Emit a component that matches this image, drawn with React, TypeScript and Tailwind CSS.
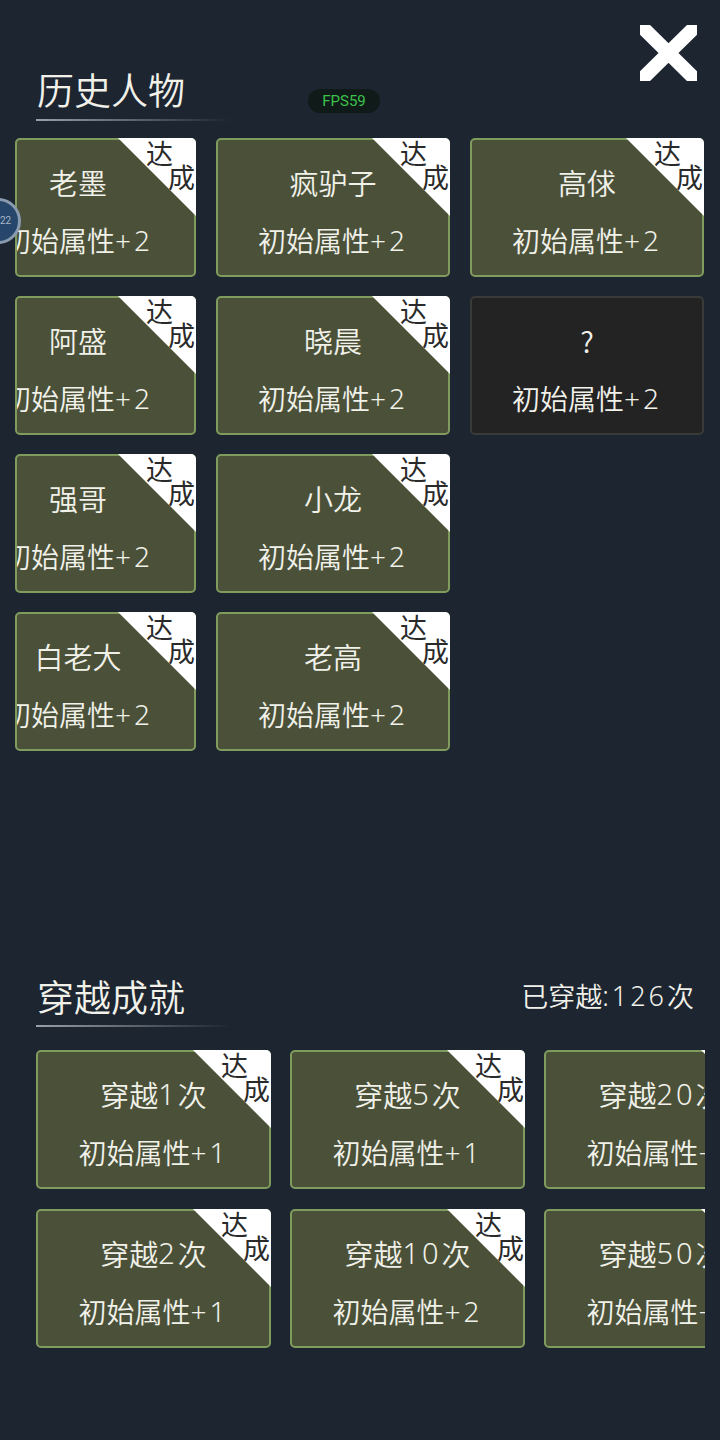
import React from "react";

function Txt({ text }: { text: string }) {
  const parts = text.split(/([0-9+:]+)/).filter((p) => p.length > 0);
  return (
    <>
      {parts.map((p, i) =>
        /^[0-9+:]+$/.test(p) ? (
          <span key={i} className="font-['Noto_Sans',sans-serif] font-light tracking-[3px]">
            {p}
          </span>
        ) : (
          <span key={i}>{p}</span>
        )
      )}
    </>
  );
}

type CardProps = {
  name: string;
  attr: string;
  done?: boolean;
  dark?: boolean;
  width: string;
  shift?: boolean;
};

function Ribbon() {
  return (
    <div className="absolute -top-[2px] -right-[2px] w-[78px] h-[78px] z-10">
      <div className="absolute inset-0 bg-white rounded-tr-[5px] [clip-path:polygon(0_0,100%_0,100%_100%)]" />
      <span className="absolute right-[23px] top-0 text-[27px] leading-[30px] text-[#2a2a2a]">达</span>
      <span className="absolute right-[1px] top-[24px] text-[27px] leading-[30px] text-[#2a2a2a]">成</span>
    </div>
  );
}

function Card({ name, attr, done = true, dark = false, width, shift = false }: CardProps) {
  return (
    <div
      className={
        "relative shrink-0 h-[139px] rounded-[5px] border-2 " +
        width +
        " " +
        (dark ? "bg-[#232323] border-[#383b37]" : "bg-[#4b5139] border-[#7f9c5e]")
      }
    >
      <div className="w-full h-full overflow-hidden rounded-[3px]">
        <div
          className={
            "flex flex-col items-center pt-[24px] font-[350] " + (shift ? "w-[230px] ml-[-54px]" : "w-full")
          }
        >
          <div className="h-[36px] flex items-center text-[29px] leading-[36px] whitespace-nowrap">
            <Txt text={name} />
          </div>
          <div className="mt-[22px] h-[36px] flex items-center text-[28px] leading-[36px] whitespace-nowrap">
            <Txt text={attr} />
          </div>
        </div>
      </div>
      {done && <Ribbon />}
    </div>
  );
}

function Underline() {
  return <div className="ml-[36px] h-[2px] w-[195px] bg-gradient-to-r from-[#9aa0a8] via-[#5d646c] to-transparent" />;
}

export default function App() {
  const top: { name: string; attr: string; done?: boolean; dark?: boolean }[][] = [
    [
      { name: "老墨", attr: "初始属性+2" },
      { name: "疯驴子", attr: "初始属性+2" },
      { name: "高俅", attr: "初始属性+2" },
    ],
    [
      { name: "阿盛", attr: "初始属性+2" },
      { name: "晓晨", attr: "初始属性+2" },
      { name: "?", attr: "初始属性+2", done: false, dark: true },
    ],
    [
      { name: "强哥", attr: "初始属性+2" },
      { name: "小龙", attr: "初始属性+2" },
    ],
    [
      { name: "白老大", attr: "初始属性+2" },
      { name: "老高", attr: "初始属性+2" },
    ],
  ];

  const bottom: { name: string; attr: string; done?: boolean }[][] = [
    [
      { name: "穿越1次", attr: "初始属性+1" },
      { name: "穿越5次", attr: "初始属性+1" },
      { name: "穿越20次", attr: "初始属性+2" },
    ],
    [
      { name: "穿越2次", attr: "初始属性+1" },
      { name: "穿越10次", attr: "初始属性+2" },
      { name: "穿越50次", attr: "初始属性+2" },
    ],
  ];

  return (
    <div className="relative w-[720px] h-[1440px] overflow-hidden bg-[#1c2530] text-[#f1f1ea] font-['Noto_Sans_CJK_SC','Noto_Sans',sans-serif]">
      {/* close X */}
      <svg className="absolute left-[640px] top-[25px]" width="57" height="56" viewBox="0 0 57 56">
        <path d="M-2 -2 L59 58 M59 -2 L-2 58" stroke="#ffffff" strokeWidth="14" />
      </svg>

      {/* FPS badge */}
      <div className="absolute left-[308px] top-[89px] w-[72px] h-[24px] rounded-full bg-[#0f1a19] flex items-center justify-center text-[15px] text-[#3cc24a] font-['Roboto',sans-serif] z-20">
        FPS59
      </div>

      {/* floating circle */}
      <div className="absolute left-[-25px] top-[198px] w-[46px] h-[46px] rounded-full bg-[#26476b] border-[3px] border-[#8a9bb0] z-20" />
      <div className="absolute left-[0px] top-[214px] text-[10px] leading-[14px] text-[#a9b6c6] font-['Roboto',sans-serif] z-30">
        22
      </div>

      {/* Section 1 */}
      <div className="pt-[67px]">
        <div className="h-[44px] pl-[37px] text-[37px] leading-[44px] font-[350]">历史人物</div>
        <div className="mt-[8px]">
          <Underline />
        </div>
        <div className="mt-[17px] ml-[15px] w-[690px] flex flex-col gap-[19px]">
          {top.map((row, ri) => (
            <div key={ri} className="flex gap-[20px]">
              {row.map((c, ci) => (
                <Card
                  key={ci}
                  name={c.name}
                  attr={c.attr}
                  done={c.done !== false}
                  dark={c.dark}
                  width={ci === 0 ? "w-[181px]" : "w-[234px]"}
                  shift={ci === 0}
                />
              ))}
            </div>
          ))}
        </div>
      </div>

      {/* Section 2 */}
      <div className="mt-[223px]">
        <div className="h-[44px] flex items-center justify-between pr-[26px]">
          <div className="pl-[37px] text-[37px] leading-[44px] font-[350]">穿越成就</div>
          <div className="h-[44px] flex items-center text-[27px] leading-[44px] font-[350]">
            <Txt text="已穿越:126次" />
          </div>
        </div>
        <div className="mt-[7px]">
          <Underline />
        </div>
        <div className="mt-[23px] ml-[36px] w-[669px] overflow-hidden flex flex-col gap-[20px]">
          {bottom.map((row, ri) => (
            <div key={ri} className="flex gap-[19px]">
              {row.map((c, ci) => (
                <Card key={ci} name={c.name} attr={c.attr} width="w-[235px]" />
              ))}
            </div>
          ))}
        </div>
      </div>
    </div>
  );
}
